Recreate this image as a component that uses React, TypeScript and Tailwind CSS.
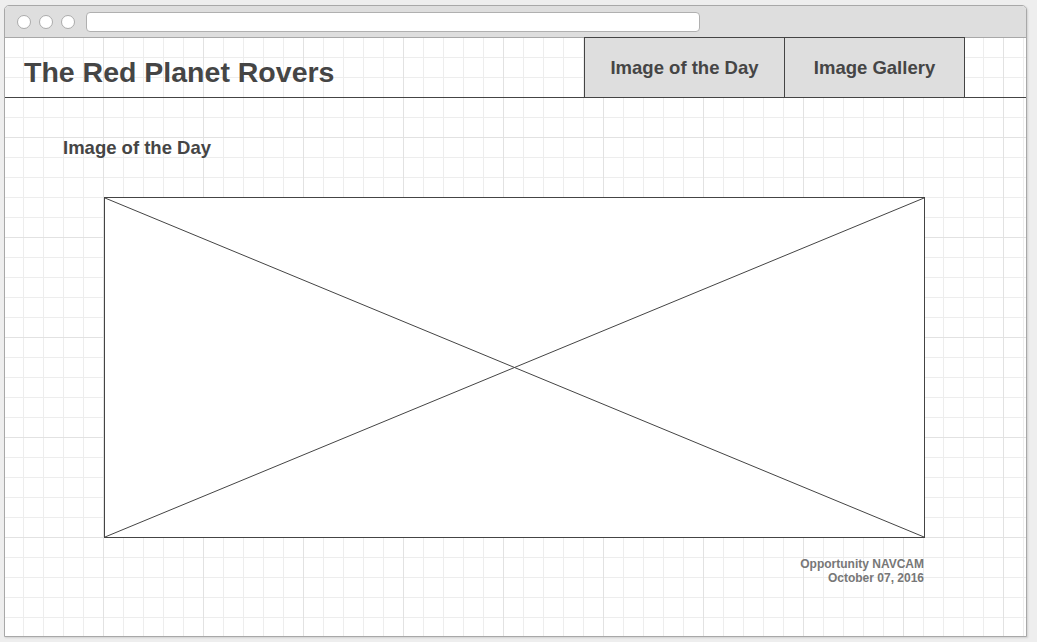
import React from "react";

const gridBg =
  "bg-[linear-gradient(to_right,#e2e2e2_1px,transparent_1px),linear-gradient(to_bottom,#e2e2e2_1px,transparent_1px),linear-gradient(to_right,#ededed_1px,transparent_1px),linear-gradient(to_bottom,#ededed_1px,transparent_1px)] bg-[size:100px_100px,100px_100px,20px_20px,20px_20px] bg-[position:98px_99px,98px_99px,18px_19px,18px_19px]";

const TrafficLight = () => (
  <div className="w-[14px] h-[14px] rounded-full bg-white border border-[#ababab]" />
);

export default function App() {
  return (
    <div
      className="min-h-screen bg-[#eeeeee] pt-[5px] pl-[4px] text-[#454545]"
      style={{ fontFamily: '"Liberation Sans", Arial, sans-serif' }}
    >
      {/* 브라우저 창 */}
      <div className="w-[1023px] h-[632px] flex flex-col rounded-t-[5px] border border-[#a8a8a8] bg-white shadow-[1px_1px_2px_rgba(0,0,0,0.12)] overflow-hidden">
        {/* 타이틀 바 */}
        <div className="h-[32px] shrink-0 flex items-center bg-[#dedede] border-b border-[#a8a8a8] pl-[12px]">
          <div className="flex gap-[8px]">
            <TrafficLight />
            <TrafficLight />
            <TrafficLight />
          </div>
          <div className="ml-[11px] w-[614px] h-[20px] rounded-[4px] bg-white border border-[#b0b0b0]" />
        </div>

        {/* 페이지 */}
        <div className={`flex-1 flex flex-col ${gridBg}`}>
          {/* 헤더 */}
          <header className="h-[60px] shrink-0 flex items-start border-b border-[#444]">
            <h1 className="pl-[19px] pt-[18px] text-[28.5px] leading-[32px] font-bold">
              The Red Planet Rovers
            </h1>
            <nav className="ml-auto mr-[61px] -mt-px flex h-[60px]">
              <div className="w-[201px] flex items-center justify-center bg-[#dedede] border-t border-x border-[#444] text-[18.5px] leading-[18px] font-bold">
                Image of the Day
              </div>
              <div className="w-[180px] flex items-center justify-center bg-[#dedede] border-t border-r border-[#444] text-[18.5px] leading-[18px] font-bold">
                Image Gallery
              </div>
            </nav>
          </header>

          {/* 본문 */}
          <main className="flex flex-col">
            <h2 className="ml-[58px] mt-[41px] text-[18.5px] leading-[18px] font-bold">
              Image of the Day
            </h2>
            <div className="ml-[99px] mt-[40px] w-[821px]">
              <div className="h-[341px] bg-white border border-[#444]">
                <svg
                  className="w-full h-full block"
                  viewBox="0 0 819 339"
                  preserveAspectRatio="none"
                >
                  <line x1="0" y1="0" x2="819" y2="339" stroke="#444" strokeWidth="1" />
                  <line x1="0" y1="339" x2="819" y2="0" stroke="#444" strokeWidth="1" />
                </svg>
              </div>
              <div className="mt-[19px] pr-[1px] text-right text-[12px] leading-[14px] font-bold text-[#777]">
                <div>Opportunity NAVCAM</div>
                <div>October 07, 2016</div>
              </div>
            </div>
          </main>
        </div>
      </div>
    </div>
  );
}
